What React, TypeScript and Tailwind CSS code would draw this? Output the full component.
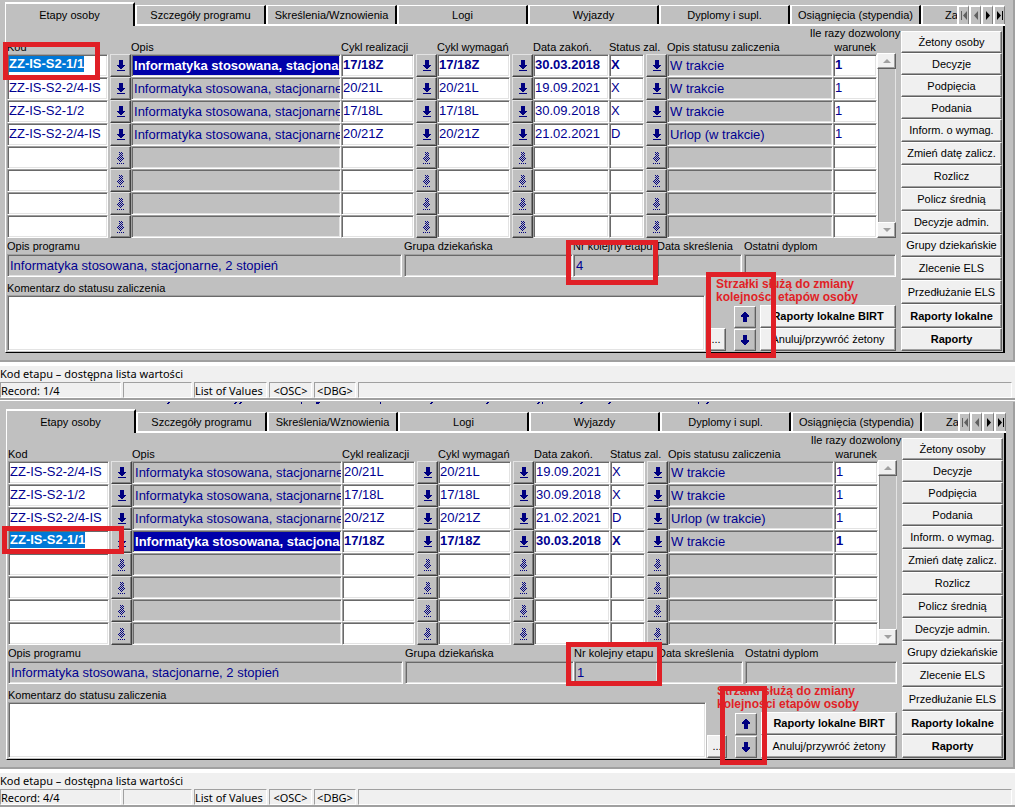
import { useState } from 'react';
import type { ReactNode } from 'react';
import clsx from 'clsx';

interface Stage {
  kod: string;
  cyklRealizacji: string;
  cyklWymagan: string;
  dataZakon: string;
  status: string;
  opisStatusu: string;
  warunek: string;
}

interface ScreenProps {
  id: string;
  stages: Stage[];
  current: number;
  nrEtapu: string;
  record: string;
  className: string;
  kodMark: string;
  nrMark: string;
  arrowsMark: string;
  children?: ReactNode;
}

const OPIS = 'Informatyka stosowana, stacjonarne, 2 stopień';

const s1: Stage = { kod: 'ZZ-IS-S2-1/1', cyklRealizacji: '17/18Z', cyklWymagan: '17/18Z', dataZakon: '30.03.2018', status: 'X', opisStatusu: 'W trakcie', warunek: '1' };
const s2: Stage = { kod: 'ZZ-IS-S2-2/4-IS', cyklRealizacji: '20/21L', cyklWymagan: '20/21L', dataZakon: '19.09.2021', status: 'X', opisStatusu: 'W trakcie', warunek: '1' };
const s3: Stage = { kod: 'ZZ-IS-S2-1/2', cyklRealizacji: '17/18L', cyklWymagan: '17/18L', dataZakon: '30.09.2018', status: 'X', opisStatusu: 'W trakcie', warunek: '1' };
const s4: Stage = { kod: 'ZZ-IS-S2-2/4-IS', cyklRealizacji: '20/21Z', cyklWymagan: '20/21Z', dataZakon: '21.02.2021', status: 'D', opisStatusu: 'Urlop (w trakcie)', warunek: '1' };

const tabs = ['Szczegóły programu', 'Skreślenia/Wznowienia', 'Logi', 'Wyjazdy', 'Dyplomy i supl.', 'Osiągnięcia (stypendia)'];

const actions = [
  { label: 'Żetony osoby', className: 'h-[22px]' },
  { label: 'Decyzje', className: 'h-[22px]' },
  { label: 'Podpięcia', className: 'h-[22px]' },
  { label: 'Podania', className: 'h-[22px]' },
  { label: 'Inform. o wymag.', className: 'h-[23px]' },
  { label: 'Zmień datę zalicz.', className: 'h-[23px]' },
  { label: 'Rozlicz', className: 'h-[23px]' },
  { label: 'Policz średnią', className: 'h-[23px]' },
  { label: 'Decyzje admin.', className: 'h-[23px]' },
  { label: 'Grupy dziekańskie', className: 'h-[23px]' },
  { label: 'Zlecenie ELS', className: 'h-[23px]' },
  { label: 'Przedłużanie ELS', className: 'h-[24px]' },
  { label: 'Raporty lokalne', className: 'h-[24px] font-bold' },
  { label: 'Raporty', className: 'h-[23px] font-bold' },
];

const sunken = 'border border-t-[#a0a0a0] border-l-[#a0a0a0] border-b-white border-r-white shadow-[inset_1px_1px_0_#696969,inset_-1px_-1px_0_#e3e3e3]';
const raised = 'border border-t-white border-l-white border-b-[#606060] border-r-[#606060] shadow-[inset_-1px_-1px_0_#a0a0a0]';
const raisedDark = 'border border-t-[#e3e3e3] border-l-[#e3e3e3] border-b-[#404040] border-r-[#404040] shadow-[inset_-1px_-1px_0_#808080]';

// 1 character = 1 pixel
const bitmaps = {
  lov: ['..####..', '..####..', '..####..', '..####..', '..####..', '########', '.######.', '..####..', '...##...', '........', '########'],
  lovOff: ['..#.#...', '...#.#..', '..#.#...', '...#.#..', '..#.#...', '.#.#.#..', '#.#.#.#.', '.#.#.#..', '..#.#...', '...#....', '........', '#.#.#.#.'],
  up: ['...##...', '..####..', '.######.', '########', '########', '..####..', '..####..', '..####..', '..####..', '..####..'],
  down: ['..####..', '..####..', '..####..', '..####..', '..####..', '########', '########', '.######.', '..####..', '...##...'],
};

const PixelIcon = ({ name }: { name: keyof typeof bitmaps }) => {
  const rows = bitmaps[name];
  return (
    <svg width={8} height={rows.length} shapeRendering="crispEdges" className="fill-[#000080]" aria-hidden="true">
      {rows.map((row, y) => row.split('').map((c, x) => (c === '#' ? <rect key={`${x}-${y}`} x={x} y={y} width={1} height={1} /> : null)))}
    </svg>
  );
};

const Field = ({ value, label, gray, bold, id }: { value: string; label?: string; gray?: boolean; bold?: boolean; id?: string }) => {
  const [text, setText] = useState(value);
  return (
    <input
      id={id}
      type="text"
      aria-label={label}
      value={text}
      readOnly={gray}
      onChange={(e) => setText(e.target.value)}
      className={clsx('block h-[23px] w-full min-w-0 text-[13px] text-[#000090] outline-none', gray ? 'bg-[#c0c0c0] pl-0.5' : 'bg-white pb-0.5 pl-px', bold && 'font-bold', sunken)}
    />
  );
};

const LovButton = ({ disabled, label }: { disabled: boolean; label: string }) => (
  <button type="button" disabled={disabled} aria-label={label} className={clsx('flex h-[23px] w-full items-center justify-center bg-[#c0c0c0]', raisedDark)}>
    <PixelIcon name={disabled ? 'lovOff' : 'lov'} />
  </button>
);

const StageRow = ({ stage, active }: { stage?: Stage; active: boolean }) => (
  <tr>
    <td className="p-0 pr-0.5">
      {active && stage ? (
        <div className={clsx('flex h-[23px] items-start bg-white pt-px pl-px', sunken)}>
          <input type="text" aria-label="Kod" defaultValue={stage.kod} className="h-4 bg-[#0078d7] text-[13px] font-bold text-white outline-none [field-sizing:content]" />
        </div>
      ) : (
        <Field label="Kod" value={stage?.kod ?? ''} />
      )}
    </td>
    <td className="p-0"><LovButton disabled={!stage} label="Lista kodów" /></td>
    <td className="p-0">
      {active ? (
        <input type="text" aria-label="Opis" readOnly value={OPIS} className={clsx('block h-[23px] w-full bg-[#0000aa] pl-0.5 text-[13px] font-bold text-white outline-none', sunken)} />
      ) : (
        <Field label="Opis" value={stage ? OPIS : ''} gray />
      )}
    </td>
    <td className="p-0 pr-0.5"><Field label="Cykl realizacji" value={stage?.cyklRealizacji ?? ''} bold={active} /></td>
    <td className="p-0"><LovButton disabled={!stage} label="Lista cykli realizacji" /></td>
    <td className="p-0 pr-0.5"><Field label="Cykl wymagań" value={stage?.cyklWymagan ?? ''} bold={active} /></td>
    <td className="p-0"><LovButton disabled={!stage} label="Lista cykli wymagań" /></td>
    <td className="p-0"><Field label="Data zakończenia" value={stage?.dataZakon ?? ''} bold={active} /></td>
    <td className="p-0 pr-0.5"><Field label="Status zaliczenia" value={stage?.status ?? ''} bold={active} /></td>
    <td className="p-0"><LovButton disabled={!stage} label="Lista statusów" /></td>
    <td className="p-0"><Field label="Opis statusu zaliczenia" value={stage?.opisStatusu ?? ''} gray /></td>
    <td className="p-0"><Field label="Warunek" value={stage?.warunek ?? ''} bold={active} /></td>
  </tr>
);

const ScrollBar = () => (
  <div className="flex w-[19px] shrink-0 flex-col self-stretch pt-[27px]">
    <button type="button" aria-label="W górę" className={clsx('flex h-4 items-center justify-center bg-[#f0f0f0]', raised)}>
      <svg width="8" height="4" className="fill-[#a0a0a0]"><path d="M0 4L4 0L8 4Z" /></svg>
    </button>
    <div className="flex-1 border-x border-l-white border-r-[#e3e3e3] bg-[#c0c0c0] shadow-[inset_1px_0_0_#909090]" />
    <button type="button" aria-label="W dół" className={clsx('flex h-4 items-center justify-center bg-[#f0f0f0]', raised)}>
      <svg width="8" height="4" className="fill-[#a0a0a0]"><path d="M0 0L4 4L8 0Z" /></svg>
    </button>
  </div>
);

const TabNav = () => {
  const items = [
    { label: 'Pierwsza', path: 'M0 0H1V9H0ZM6 0V9L2 4.5Z', className: 'fill-[#606060]' },
    { label: 'Poprzednia', path: 'M5 0V9L1 4.5Z', className: 'fill-[#606060]' },
    { label: 'Następna', path: 'M1 0V9L5 4.5Z', className: 'fill-black' },
    { label: 'Ostatnia', path: 'M0 0V9L4 4.5ZM5 0H6V9H5Z', className: 'fill-black' },
  ];
  return (
    <div className="flex w-12 shrink-0">
      {items.map((item) => (
        <button key={item.label} type="button" aria-label={item.label} className="flex h-[19px] flex-1 items-center justify-center border-t-2 border-l-2 border-r border-t-white border-l-white border-r-[#808080] bg-[#c0c0c0]">
          <svg width="6" height="9" className={item.className}><path d={item.path} /></svg>
        </button>
      ))}
    </div>
  );
};

const LabeledField = ({ id, label, value, className }: { id: string; label: string; value: string; className: string }) => (
  <div className={className}>
    <label htmlFor={id} className="block h-4 leading-4 whitespace-nowrap">{label}</label>
    <Field id={id} value={value} gray />
  </div>
);

const Mark = ({ className }: { className: string }) => (
  <div className={clsx('pointer-events-none absolute z-10 border-[5px] border-[#e01f26]', className)} />
);

const StatusBar = ({ record }: { record: string }) => {
  const cell = 'border border-t-[#a0a0a0] border-l-[#a0a0a0] border-b-white border-r-white whitespace-nowrap';
  return (
    <footer className="border-t-4 border-b-2 border-t-white border-b-[#a0a0a0] bg-[#f0f0f0] pr-[3px] font-['Noto_Sans',sans-serif] text-[11px]">
      <p className="h-4 leading-4">Kod etapu – dostępna lista wartości</p>
      <div className="flex h-4 gap-0.5 leading-[15px]">
        <span className={clsx('w-[121px]', cell)}>Record: {record}</span>
        <span className={clsx('w-[69px]', cell)} />
        <span className={clsx('w-[73px]', cell)}>List of Values</span>
        <span className={clsx('w-[43px] text-center', cell)}>&lt;OSC&gt;</span>
        <span className={clsx('w-[42px] text-center', cell)}>&lt;DBG&gt;</span>
        <span className={clsx('flex-1', cell)} />
      </div>
    </footer>
  );
};

const Screen = ({ id, stages, current, nrEtapu, record, className, kodMark, nrMark, arrowsMark, children }: ScreenProps) => (
  <section className="relative">
    <div className={clsx('border-r-2 border-b-2 border-[#a0a0a0] bg-[#c0c0c0] pb-[7px]', className)}>
      {children}
      <div className="flex h-6 items-end">
        <button type="button" className="h-6 w-[130px] shrink-0 border-t-2 border-r-2 border-l border-t-white border-r-black border-l-white">Etapy osoby</button>
        {tabs.map((tab) => (
          <button key={tab} type="button" className="h-[21px] w-[131px] shrink-0 border-b-2 border-l-2 border-white whitespace-nowrap">
            <span className="block h-[19px] border-t border-r-2 border-t-white border-r-black leading-[18px]">{tab}</span>
          </button>
        ))}
        <div className="flex h-[21px] min-w-0 flex-1 items-start border-b-2 border-l-2 border-white">
          <button type="button" className="h-[19px] min-w-0 flex-1 overflow-hidden border-t border-white pl-[22px] text-left leading-[18px]">Za</button>
          <TabNav />
        </div>
      </div>

      <div className="flex border-r-2 border-b border-l border-r-black border-b-black border-l-white pr-px pb-px pl-px">
        <div className="min-w-0 flex-1">
          <div className="flex">
            <table className="w-full table-fixed border-separate border-spacing-0">
              <colgroup>
                <col className="w-[103px]" />
                <col className="w-[21px]" />
                <col className="w-[210px]" />
                <col className="w-[75px]" />
                <col className="w-[21px]" />
                <col className="w-[75px]" />
                <col className="w-[21px]" />
                <col className="w-[76px]" />
                <col className="w-[37px]" />
                <col className="w-[21px]" />
                <col />
                <col className="w-[44px]" />
              </colgroup>
              <thead>
                <tr className="h-7 text-left align-bottom leading-[14px] whitespace-nowrap">
                  <th colSpan={2} className="p-0 font-normal">Kod</th>
                  <th className="p-0 font-normal">Opis</th>
                  <th colSpan={2} className="p-0 font-normal">Cykl realizacji</th>
                  <th colSpan={2} className="p-0 font-normal">Cykl wymagań</th>
                  <th className="p-0 font-normal">Data zakoń.</th>
                  <th colSpan={2} className="p-0 font-normal">Status zal.</th>
                  <th className="p-0 font-normal">Opis statusu zaliczenia</th>
                  <th className="p-0 font-normal">
                    <span className="flex flex-col items-center">
                      <span>Ile razy dozwolony</span>
                      <span>warunek</span>
                    </span>
                  </th>
                </tr>
              </thead>
              <tbody>
                {Array.from({ length: 8 }, (_, i) => (
                  <StageRow key={i} stage={stages[i]} active={i === current} />
                ))}
              </tbody>
            </table>
            <ScrollBar />
          </div>

          <div className="flex">
            <LabeledField id={`${id}-opis`} label="Opis programu" value={OPIS} className="min-w-0 flex-1 pr-0.5" />
            <LabeledField id={`${id}-grupa`} label="Grupa dziekańska" value="" className="w-[169px]" />
            <LabeledField id={`${id}-nr`} label="Nr kolejny etapu" value={nrEtapu} className="w-[84px]" />
            <LabeledField id={`${id}-skreslenie`} label="Data skreślenia" value="" className="w-[87px] pr-0.5" />
            <LabeledField id={`${id}-dyplom`} label="Ostatni dyplom" value="" className="w-[152px]" />
          </div>

          <div className="flex">
            <div className="min-w-0 flex-1 pt-1 pr-px">
              <label htmlFor={`${id}-komentarz`} className="block h-3.5 leading-[14px]">Komentarz do statusu zaliczenia</label>
              <textarea id={`${id}-komentarz`} className={clsx('block h-14 w-full resize-none bg-white text-[13px] text-[#000090] outline-none', sunken)} />
            </div>
            <div className="w-[190px] pt-px">
              <p className="mb-px pl-2.5 text-[12px] leading-[13px] font-bold whitespace-nowrap text-[#e01f26]">
                Strzałki służą do zmiany
                <br />
                kolejności etapów osoby
              </p>
              <div className="flex items-end">
                <button type="button" aria-label="Edytuj komentarz" className={clsx('h-[23px] w-5 bg-[#f0f0f0]', raised)}>...</button>
                <div className="ml-2 flex flex-col gap-px">
                  <button type="button" aria-label="Przesuń w górę" className={clsx('flex h-[22px] w-[22px] items-center justify-center bg-[#c0c0c0]', raised)}><PixelIcon name="up" /></button>
                  <button type="button" aria-label="Przesuń w dół" className={clsx('flex h-[22px] w-[22px] items-center justify-center bg-[#c0c0c0]', raised)}><PixelIcon name="down" /></button>
                </div>
                <div className="ml-1 flex flex-1 flex-col">
                  <button type="button" className={clsx('h-[23px] bg-[#f0f0f0] font-bold', raised)}>Raporty lokalne BIRT</button>
                  <button type="button" className={clsx('h-[23px] bg-[#f0f0f0]', raised)}>Anuluj/przywróć żetony</button>
                </div>
              </div>
            </div>
          </div>
        </div>

        <div className="ml-[5px] flex w-[101px] shrink-0 flex-col pt-[5px]">
          {actions.map((action) => (
            <button key={action.label} type="button" className={clsx('bg-[#f0f0f0] whitespace-nowrap', raised, action.className)}>{action.label}</button>
          ))}
        </div>
      </div>
    </div>
    <StatusBar record={record} />

    <Mark className={kodMark} />
    <Mark className={nrMark} />
    <Mark className={arrowsMark} />
  </section>
);

export default function App() {
  return (
    <main className="min-h-screen bg-white font-['Liberation_Sans',Arial,sans-serif] text-[11px] text-black">
      <Screen
        id="before"
        stages={[s1, s2, s3, s4]}
        current={0}
        nrEtapu="4"
        record="1/4"
        className="pt-0.5 pr-2 pl-[5px]"
        kodMark="top-[42px] left-[3px] h-[38px] w-[97px]"
        nrMark="top-[240px] left-[566px] h-[45px] w-[92px]"
        arrowsMark="top-[272px] left-[706px] h-[86px] w-[70px]"
      />
      <div className="mt-px h-px bg-[#c0c0c0]" />
      <Screen
        id="after"
        stages={[s2, s3, s4, s1]}
        current={3}
        nrEtapu="1"
        record="4/4"
        className="pr-[7px] pl-1.5"
        kodMark="top-[124px] left-[2px] h-[28px] w-[122px]"
        nrMark="top-[240px] left-[566px] h-[44px] w-[96px]"
        arrowsMark="top-[284px] left-[720px] h-[79px] w-[47px]"
      >
        {/* descenders of a line cut off by the scroll edge */}
        <svg className="block h-[7px] w-full fill-[#000080]" shapeRendering="crispEdges" aria-hidden="true">
          {[161, 228, 233, 424, 480, 531, 574, 602, 700].map((x) => (
            <path key={x} d={`M${x + 1} 0h2v1h-1v1h-2v-1h1Z`} />
          ))}
          {[295, 374, 536, 692].map((x) => (
            <path key={x} d={`M${x} 0h1v2h-1Z`} />
          ))}
          <path d="M310 0h4v1h-1v1h-3Z" />
        </svg>
      </Screen>
    </main>
  );
}
